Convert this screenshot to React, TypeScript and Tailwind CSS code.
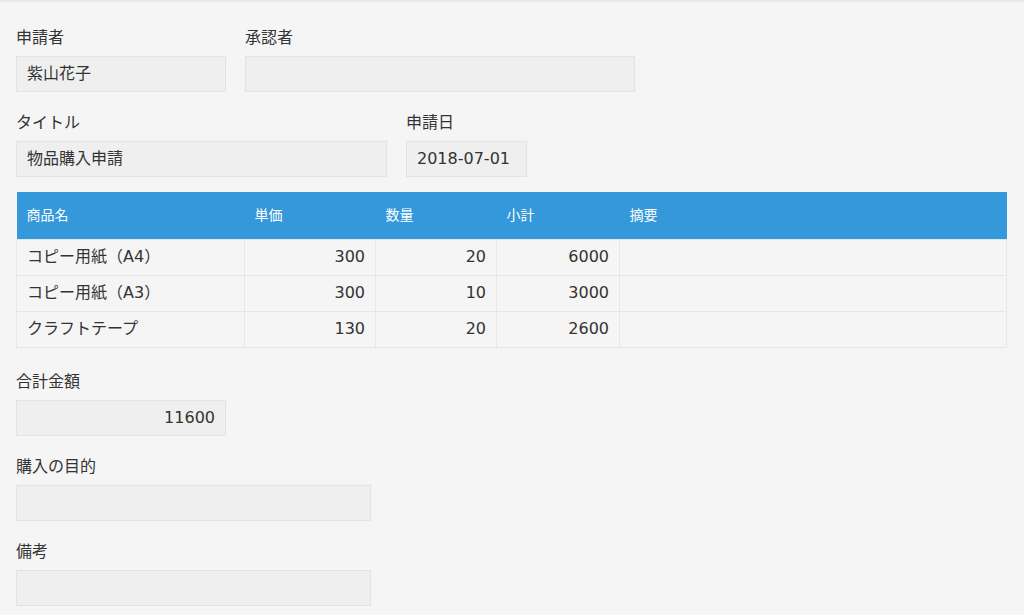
import React from "react";

type Row = { name: string; price: number; qty: number; subtotal: number; note: string };

const rows: Row[] = [
  { name: "コピー用紙（A4）", price: 300, qty: 20, subtotal: 6000, note: "" },
  { name: "コピー用紙（A3）", price: 300, qty: 10, subtotal: 3000, note: "" },
  { name: "クラフトテープ", price: 130, qty: 20, subtotal: 2600, note: "" },
];

function Field({
  label,
  value,
  width,
  align = "left",
}: {
  label: string;
  value?: string;
  width: string;
  align?: "left" | "right";
}) {
  return (
    <div className="flex flex-col">
      <span className="h-[20px] text-[16px] leading-[20px] text-[#333]">{label}</span>
      <div
        className={`mt-[8px] flex h-[36px] items-center border border-[#e3e3e3] bg-[#efefef] px-[10px] text-[16px] text-[#333] ${width} ${
          align === "right" ? "justify-end" : ""
        }`}
      >
        {value}
      </div>
    </div>
  );
}

export default function App() {
  return (
    <div
      className="h-[615px] w-[1024px] overflow-hidden border-t-2 border-[#e8e8e8] bg-[#f5f5f5] px-[16px] pt-[26px]"
      style={{ fontFamily: '"DejaVu Sans", "Noto Sans CJK JP", sans-serif' }}
    >
      <div className="flex gap-[19px]">
        <Field label="申請者" value="紫山花子" width="w-[210px]" />
        <Field label="承認者" width="w-[390px]" />
      </div>

      <div className="mt-[21px] flex gap-[19px]">
        <Field label="タイトル" value="物品購入申請" width="w-[371px]" />
        <Field label="申請日" value="2018-07-01" width="w-[121px]" />
      </div>

      <table className="mt-[15px] w-[991px] table-fixed border-collapse text-[#333]">
        <colgroup>
          <col className="w-[228px]" />
          <col className="w-[131px]" />
          <col className="w-[121px]" />
          <col className="w-[123px]" />
          <col />
        </colgroup>
        <thead>
          <tr className="h-[47px] bg-[#3598db] text-left text-[14px] text-white">
            <th className="px-[10px] font-normal">商品名</th>
            <th className="px-[10px] font-normal">単価</th>
            <th className="px-[10px] font-normal">数量</th>
            <th className="px-[10px] font-normal">小計</th>
            <th className="px-[10px] font-normal">摘要</th>
          </tr>
        </thead>
        <tbody className="text-[16px]">
          {rows.map((r) => (
            <tr key={r.name} className="h-[36px]">
              <td className="border border-[#e3e7e8] px-[10px]">{r.name}</td>
              <td className="border border-[#e3e7e8] px-[10px] text-right">{r.price}</td>
              <td className="border border-[#e3e7e8] px-[10px] text-right">{r.qty}</td>
              <td className="border border-[#e3e7e8] px-[10px] text-right">{r.subtotal}</td>
              <td className="border border-[#e3e7e8] px-[10px]">{r.note}</td>
            </tr>
          ))}
        </tbody>
      </table>

      <div className="mt-[24px] flex flex-col gap-[21px]">
        <Field label="合計金額" value="11600" width="w-[210px]" align="right" />
        <Field label="購入の目的" width="w-[355px]" />
        <Field label="備考" width="w-[355px]" />
      </div>
    </div>
  );
}
